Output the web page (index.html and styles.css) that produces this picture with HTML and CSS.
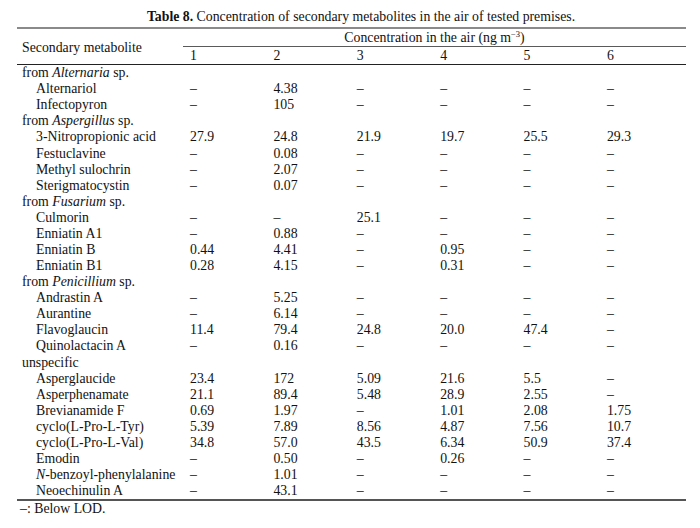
FILE: index.html
```html
<!DOCTYPE html>
<html>
<head>
<meta charset="utf-8">
<link rel="stylesheet" href="styles.css">
</head>
<body>
<div class="page">
  <div class="caption"><b>Table 8.</b> Concentration of secondary metabolites in the air of tested premises.</div>
  <table class="data">
    <colgroup>
      <col class="c-name"><col class="c-num"><col class="c-num"><col class="c-num"><col class="c-num"><col class="c-num"><col class="c-last">
    </colgroup>
    <thead>
      <tr class="h1">
        <th class="name-h" rowspan="2">Secondary metabolite</th>
        <th class="span-h" colspan="6">Concentration in the air (ng m<sup>−3</sup>)</th>
      </tr>
      <tr class="h2">
        <th>1</th><th>2</th><th>3</th><th>4</th><th>5</th><th>6</th>
      </tr>
    </thead>
    <tbody>
      <tr><td class="grp" colspan="7">from <i>Alternaria</i> sp.</td></tr>
      <tr><td class="it">Alternariol</td><td>–</td><td>4.38</td><td>–</td><td>–</td><td>–</td><td>–</td></tr>
      <tr><td class="it">Infectopyron</td><td>–</td><td>105</td><td>–</td><td>–</td><td>–</td><td>–</td></tr>
      <tr><td class="grp" colspan="7">from <i>Aspergillus</i> sp.</td></tr>
      <tr><td class="it">3-Nitropropionic acid</td><td>27.9</td><td>24.8</td><td>21.9</td><td>19.7</td><td>25.5</td><td>29.3</td></tr>
      <tr><td class="it">Festuclavine</td><td>–</td><td>0.08</td><td>–</td><td>–</td><td>–</td><td>–</td></tr>
      <tr><td class="it">Methyl sulochrin</td><td>–</td><td>2.07</td><td>–</td><td>–</td><td>–</td><td>–</td></tr>
      <tr><td class="it">Sterigmatocystin</td><td>–</td><td>0.07</td><td>–</td><td>–</td><td>–</td><td>–</td></tr>
      <tr><td class="grp" colspan="7">from <i>Fusarium</i> sp.</td></tr>
      <tr><td class="it">Culmorin</td><td>–</td><td>–</td><td>25.1</td><td>–</td><td>–</td><td>–</td></tr>
      <tr><td class="it">Enniatin A1</td><td>–</td><td>0.88</td><td>–</td><td>–</td><td>–</td><td>–</td></tr>
      <tr><td class="it">Enniatin B</td><td>0.44</td><td>4.41</td><td>–</td><td>0.95</td><td>–</td><td>–</td></tr>
      <tr><td class="it">Enniatin B1</td><td>0.28</td><td>4.15</td><td>–</td><td>0.31</td><td>–</td><td>–</td></tr>
      <tr><td class="grp" colspan="7">from <i>Penicillium</i> sp.</td></tr>
      <tr><td class="it">Andrastin A</td><td>–</td><td>5.25</td><td>–</td><td>–</td><td>–</td><td>–</td></tr>
      <tr><td class="it">Aurantine</td><td>–</td><td>6.14</td><td>–</td><td>–</td><td>–</td><td>–</td></tr>
      <tr><td class="it">Flavoglaucin</td><td>11.4</td><td>79.4</td><td>24.8</td><td>20.0</td><td>47.4</td><td>–</td></tr>
      <tr><td class="it">Quinolactacin A</td><td>–</td><td>0.16</td><td>–</td><td>–</td><td>–</td><td>–</td></tr>
      <tr><td class="grp" colspan="7">unspecific</td></tr>
      <tr><td class="it">Asperglaucide</td><td>23.4</td><td>172</td><td>5.09</td><td>21.6</td><td>5.5</td><td>–</td></tr>
      <tr><td class="it">Asperphenamate</td><td>21.1</td><td>89.4</td><td>5.48</td><td>28.9</td><td>2.55</td><td>–</td></tr>
      <tr><td class="it">Brevianamide F</td><td>0.69</td><td>1.97</td><td>–</td><td>1.01</td><td>2.08</td><td>1.75</td></tr>
      <tr><td class="it">cyclo(L-Pro-L-Tyr)</td><td>5.39</td><td>7.89</td><td>8.56</td><td>4.87</td><td>7.56</td><td>10.7</td></tr>
      <tr><td class="it">cyclo(L-Pro-L-Val)</td><td>34.8</td><td>57.0</td><td>43.5</td><td>6.34</td><td>50.9</td><td>37.4</td></tr>
      <tr><td class="it">Emodin</td><td>–</td><td>0.50</td><td>–</td><td>0.26</td><td>–</td><td>–</td></tr>
      <tr><td class="it"><i>N</i>-benzoyl-phenylalanine</td><td>–</td><td>1.01</td><td>–</td><td>–</td><td>–</td><td>–</td></tr>
      <tr><td class="it">Neoechinulin A</td><td>–</td><td>43.1</td><td>–</td><td>–</td><td>–</td><td>–</td></tr>
    </tbody>
  </table>
  <div class="note">–: Below LOD.</div>
</div>
</body>
</html>
```

FILE: styles.css
```css
html, body {
  margin: 0;
  padding: 0;
  background: #ffffff;
}
body {
  font-family: "Liberation Serif", "Times New Roman", serif;
  font-size: 13.8px;
  color: #121212;
}
.page {
  width: 669px;
  padding: 9px 0 0 17px;
}
.caption {
  line-height: 16px;
  height: 16px;
  text-align: center;
  padding-left: 19px;
  margin-bottom: 2px;
  white-space: nowrap;
}
.caption b {
  font-weight: bold;
}
.data {
  width: 669px;
  border-collapse: collapse;
  table-layout: fixed;
  border-top: 2px solid #8a8a8a;
  border-bottom: 2px solid #555555;
}
.c-name { width: 166px; }
.c-num { width: 83.4px; }
.c-last { width: 86px; }
.data th, .data td {
  padding: 0 0 0 7px;
  font-weight: normal;
  text-align: left;
  white-space: nowrap;
  line-height: 16.08px;
  height: 16.08px;
  vertical-align: middle;
}
.h1 th { padding-top: 1px; }
.span-h {
  text-align: center !important;
  padding-left: 0 !important;
  border-bottom: 1px solid #5a5a5a;
}
.name-h {
  padding-left: 5px !important;
  padding-top: 3px !important;
}
.h2 th {
  padding-top: 1px;
  padding-bottom: 0;
}
thead {
  border-bottom: 1px solid #222222;
}
sup {
  font-size: 8.5px;
  line-height: 0;
  vertical-align: 5px;
}
td.grp {
  padding-left: 5px;
}
td.it {
  padding-left: 19px;
}
.note {
  line-height: 16px;
  padding-left: 3px;
}
```
